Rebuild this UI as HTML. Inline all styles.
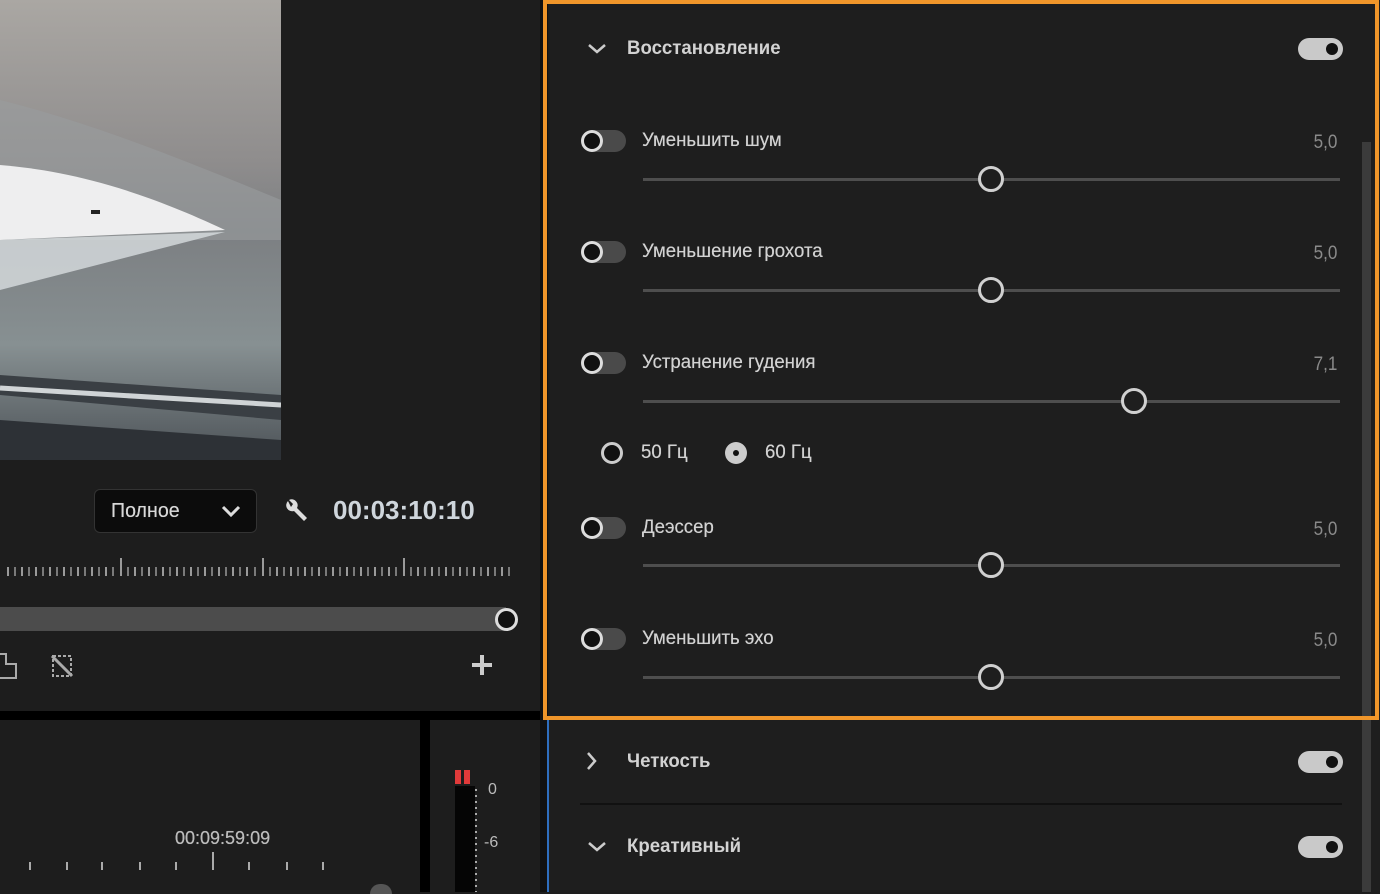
<!DOCTYPE html>
<html><head><meta charset="utf-8">
<style>
*{margin:0;padding:0;box-sizing:border-box}
body{width:1380px;height:892px;overflow:hidden;background:#1d1d1d;position:relative;font-family:"Liberation Sans","DejaVu Sans",sans-serif;color:#d2d2d2}
.a{position:absolute}
.t{position:absolute;font-size:19px;transform-origin:left center;transform:scaleX(.98);white-space:nowrap;line-height:24px;text-shadow:0 0 .4px #d2d2d2}
.b{font-weight:bold;text-shadow:none}
.v{position:absolute;font-size:19px;color:#8a8a8a;line-height:24px;right:43px;transform:scaleX(.9);transform-origin:right center}
.tr{position:absolute;height:3px;background:#4e4e4e;left:643px;width:697px}
.kn{position:absolute;width:26px;height:26px;border-radius:50%;border:3px solid #d0d0d0;background:#1e1e1e}
.tg{position:absolute;left:581px;width:45px;height:22px;border-radius:11px;background:#4a4a4a}
.tg::before{content:"";position:absolute;left:0;top:0;width:22px;height:22px;border-radius:50%;background:#111;box-shadow:inset 0 0 0 3px #ddd}
.tgo{position:absolute;left:1298px;width:45px;height:22px;border-radius:11px;background:#c9c9c9}
.tgo::before{content:"";position:absolute;right:5px;top:5px;width:12px;height:12px;border-radius:50%;background:#111}
</style></head><body>
<!-- video -->
<svg class="a" style="left:0;top:0" width="281" height="460">
<defs>
<linearGradient id="g1" x1="0" y1="0" x2="0" y2="1"><stop offset="0" stop-color="#aaa7a3"/><stop offset=".35" stop-color="#8f8d8d"/><stop offset=".5" stop-color="#7c7f82"/><stop offset=".75" stop-color="#879092"/><stop offset="1" stop-color="#4c5257"/></linearGradient>
</defs>
<rect width="281" height="460" fill="url(#g1)"/>
<path d="M0 100 C80 120 160 150 281 200 L281 240 L0 240Z" fill="#9a9c9f" opacity=".6"/>
<path d="M0 165 C60 170 130 185 225 230 L0 240Z" fill="#eeeeef"/>
<path d="M0 240 L225 232 L0 290Z" fill="#d8dde0" opacity=".8"/>
<rect x="91" y="210" width="9" height="4" fill="#222"/>
<path d="M0 375 L281 395 L281 420 L0 395Z" fill="#3a3f44"/>
<path d="M0 388 L281 405" stroke="#d0d4d6" stroke-width="5"/>
<path d="M0 420 L281 440 L281 460 L0 460Z" fill="#2d3136"/>
</svg>
<!-- controls -->
<div class="a" style="left:94px;top:489px;width:163px;height:44px;background:#0c0c0c;border:1px solid #333;border-radius:6px"></div>
<div class="t" style="left:111px;top:499px;color:#d8d8d8;font-size:20px">Полное</div>
<svg class="a" style="left:220px;top:503px" width="22" height="16"><path d="M3 4l8 8 8-8" stroke="#ddd" stroke-width="3" fill="none"/></svg>
<svg class="a" style="left:282px;top:497px" width="28" height="28"><path d="M6 4a6 6 0 0 0 6 10l10 10 3-3-10-10a6 6 0 0 0-8-8l4 4-2 3z" fill="#ddd"/></svg>
<div class="t b" style="left:333px;top:498px;font-size:26px;color:#cfd6dc;transform:none">00:03:10:10</div>
<svg class="a" style="left:0;top:555px" width="515" height="26">
<g stroke="#9a9a9a" stroke-width="2">
<path d="M8 12v9M22 12v9M36 12v9M50 12v9M64 12v9M78 12v9M92 12v9M106 12v9M121 3v18M135 12v9M149 12v9M163 12v9M177 12v9M191 12v9M205 12v9M219 12v9M233 12v9M247 12v9M263 3v18M277 12v9M291 12v9M305 12v9M319 12v9M333 12v9M347 12v9M361 12v9M375 12v9M389 12v9M404 3v18M418 12v9M432 12v9M446 12v9M460 12v9M474 12v9M488 12v9M502 12v9"/>
<path d="M15 12v9M29 12v9M43 12v9M57 12v9M71 12v9M85 12v9M99 12v9M113 12v9M128 12v9M142 12v9M156 12v9M170 12v9M184 12v9M198 12v9M212 12v9M226 12v9M240 12v9M255 12v9M270 12v9M284 12v9M298 12v9M312 12v9M326 12v9M340 12v9M354 12v9M368 12v9M382 12v9M396 12v9M411 12v9M425 12v9M439 12v9M453 12v9M467 12v9M481 12v9M495 12v9M509 12v9" stroke-width="1.5"/>
</g></svg>
<div class="a" style="left:0;top:607px;width:506px;height:24px;background:#4c4c4c"></div>
<div class="a" style="left:495px;top:608px;width:23px;height:23px;border-radius:50%;background:#111;border:3px solid #ddd"></div>
<svg class="a" style="left:0;top:652px" width="20" height="28"><path d="M0 2h6v10h10v14H0" stroke="#aaa" stroke-width="2" fill="none"/></svg>
<svg class="a" style="left:48px;top:652px" width="28" height="28"><rect x="5" y="4" width="18" height="20" fill="none" stroke="#aaa" stroke-width="2" stroke-dasharray="3 2"/><path d="M4 4l20 20" stroke="#aaa" stroke-width="3"/></svg>
<div class="a" style="left:472px;top:663px;width:20px;height:4px;background:#ccc"></div>
<div class="a" style="left:480px;top:655px;width:4px;height:20px;background:#ccc"></div>
<!-- dividers -->
<div class="a" style="left:0;top:711px;width:548px;height:9px;background:#000"></div>
<div class="a" style="left:420px;top:720px;width:10px;height:172px;background:#000"></div>
<div class="a" style="left:540px;top:0;width:8px;height:892px;background:#111"></div>
<div class="a" style="left:547px;top:720px;width:2px;height:172px;background:#2f6fbf"></div>
<!-- timeline -->
<div class="t" style="left:175px;top:826px;font-size:18px;color:#bbb;transform:none">00:09:59:09</div>
<svg class="a" style="left:0;top:848px" width="420" height="30"><g stroke="#aaa" stroke-width="2"><path d="M30 14v8M67 14v8M102 14v8M140 14v8M176 14v8M213 4v18M249 14v8M287 14v8M323 14v8"/></g></svg>
<div class="a" style="left:370px;top:884px;width:22px;height:10px;border-radius:11px 11px 0 0;background:#555"></div>
<!-- meter -->
<div class="a" style="left:455px;top:770px;width:6px;height:14px;background:#e03a3a"></div>
<div class="a" style="left:464px;top:770px;width:6px;height:14px;background:#e03a3a"></div>
<div class="a" style="left:455px;top:786px;width:20px;height:106px;background:#050505"></div>
<svg class="a" style="left:472px;top:786px" width="12" height="106"><path d="M4 3v103" stroke="#aaa" stroke-width="2" stroke-dasharray="2 4"/></svg>
<div class="a" style="left:488px;top:781px;font-size:16px;color:#bbb">0</div>
<div class="a" style="left:484px;top:834px;font-size:16px;color:#bbb">-6</div>
<!-- right panel -->
<div class="a" style="left:549px;top:0;width:831px;height:892px;background:#1e1e1e"></div>
<div class="a" style="left:1362px;top:142px;width:9px;height:750px;background:#3b3b3b"></div>
<div class="a" style="left:580px;top:803px;width:762px;height:2px;background:#111"></div>

<svg class="a" style="left:587px;top:42px" width="20" height="14"><path d="M2 3l8 7 8-7" stroke="#ccc" stroke-width="2.5" fill="none"/></svg>
<div class="t b" style="left:627px;top:37px">Восстановление</div>
<div class="tgo" style="top:38px"></div>

<div class="tg" style="top:130px"></div>
<div class="t" style="left:642px;top:129px">Уменьшить шум</div>
<div class="v" style="top:131px">5,0</div>
<div class="tr" style="top:178px"></div><div class="kn" style="left:978px;top:166px"></div>

<div class="tg" style="top:241px"></div>
<div class="t" style="left:642px;top:240px">Уменьшение грохота</div>
<div class="v" style="top:242px">5,0</div>
<div class="tr" style="top:289px"></div><div class="kn" style="left:978px;top:277px"></div>

<div class="tg" style="top:352px"></div>
<div class="t" style="left:642px;top:351px">Устранение гудения</div>
<div class="v" style="top:353px">7,1</div>
<div class="tr" style="top:400px"></div><div class="kn" style="left:1121px;top:388px"></div>

<div class="a" style="left:601px;top:442px;width:22px;height:22px;border-radius:50%;background:#111;border:3px solid #ccc"></div>
<div class="t" style="left:641px;top:441px">50 Гц</div>
<div class="a" style="left:725px;top:442px;width:22px;height:22px;border-radius:50%;background:#ccc"></div>
<div class="a" style="left:733px;top:450px;width:6px;height:6px;border-radius:50%;background:#111"></div>
<div class="t" style="left:765px;top:441px">60 Гц</div>

<div class="tg" style="top:517px"></div>
<div class="t" style="left:642px;top:516px">Деэссер</div>
<div class="v" style="top:518px">5,0</div>
<div class="tr" style="top:564px"></div><div class="kn" style="left:978px;top:552px"></div>

<div class="tg" style="top:628px"></div>
<div class="t" style="left:642px;top:627px">Уменьшить эхо</div>
<div class="v" style="top:629px">5,0</div>
<div class="tr" style="top:676px"></div><div class="kn" style="left:978px;top:664px"></div>

<svg class="a" style="left:585px;top:751px" width="14" height="20"><path d="M3 2l7 8-7 8" stroke="#ccc" stroke-width="2.5" fill="none"/></svg>
<div class="t b" style="left:627px;top:750px">Четкость</div>
<div class="tgo" style="top:751px"></div>

<svg class="a" style="left:587px;top:840px" width="20" height="14"><path d="M2 3l8 7 8-7" stroke="#ccc" stroke-width="2.5" fill="none"/></svg>
<div class="t b" style="left:627px;top:835px">Креативный</div>
<div class="tgo" style="top:836px"></div>

<div class="a" style="left:543px;top:0;width:836px;height:720px;border:4px solid #f0962a"></div>
</body></html>
